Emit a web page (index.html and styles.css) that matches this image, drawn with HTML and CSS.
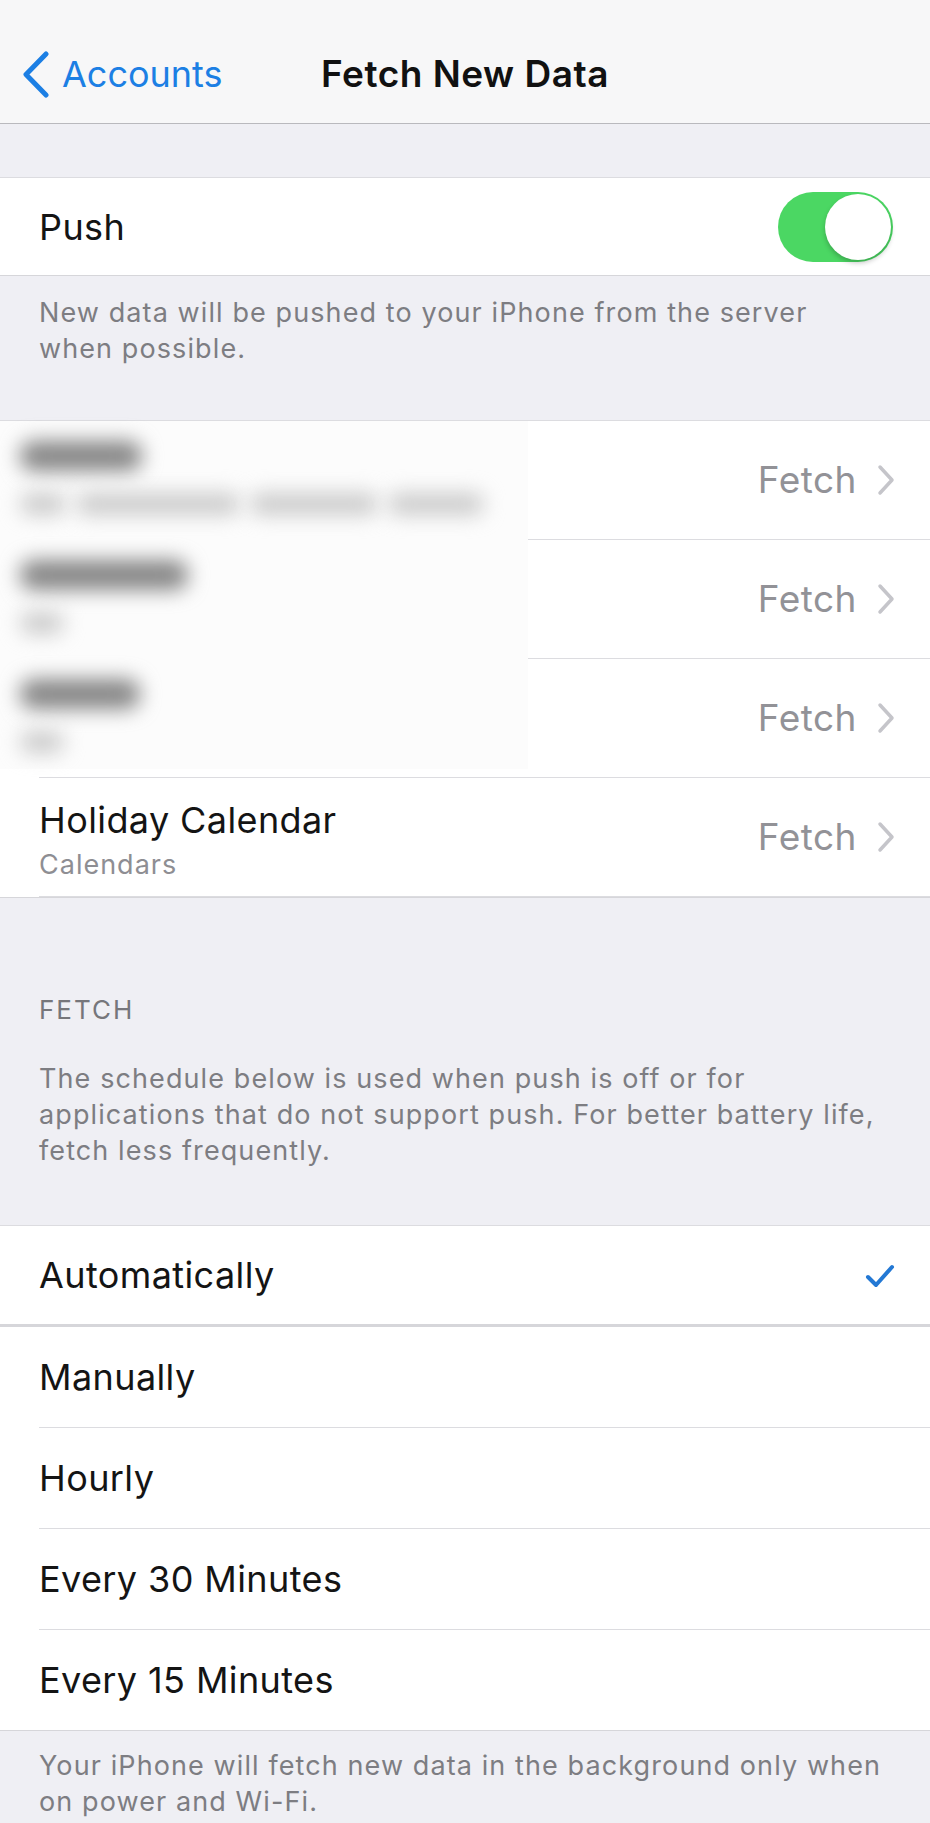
FILE: index.html
```html
<!DOCTYPE html>
<html lang="en">
<head>
    <meta charset="UTF-8">
    <meta name="viewport" content="width=device-width, initial-scale=1.0">
    <title>Fetch New Data</title>
    <link rel="stylesheet" href="styles.css">
</head>
<body>
    <!-- Navigation bar -->
    <div class="navbar">
        <div class="back">
            <svg class="back-chevron" width="28" height="47" viewBox="0 0 28 47">
                <path d="M24 3 L4 23.5 L24 44" />
            </svg>
            <span>Accounts</span>
        </div>
        <div class="title">Fetch New Data</div>
    </div>

    <!-- Push switch -->
    <div class="group group-first">
        <div class="cell">
            <div class="cell-content cell-push">
                <span class="label">Push</span>
                <span class="switch on"></span>
            </div>
        </div>
    </div>
    <p class="note note-push">New data will be pushed to your iPhone from the server<br>when possible.</p>

    <!-- Accounts (first three are redacted) -->
    <div class="group group-accounts">
        <div class="cell">
            <div class="cell-content cell-account">
                <span class="label"></span>
                <span class="value">Fetch <svg class="chevron" width="18" height="32" viewBox="0 0 18 32"><path d="M3 3 L15 16 L3 29" /></svg></span>
            </div>
        </div>
        <div class="cell">
            <div class="cell-content cell-account">
                <span class="label"></span>
                <span class="value">Fetch <svg class="chevron" width="18" height="32" viewBox="0 0 18 32"><path d="M3 3 L15 16 L3 29" /></svg></span>
            </div>
        </div>
        <div class="cell">
            <div class="cell-content cell-account">
                <span class="label"></span>
                <span class="value">Fetch <svg class="chevron" width="18" height="32" viewBox="0 0 18 32"><path d="M3 3 L15 16 L3 29" /></svg></span>
            </div>
        </div>
        <div class="cell">
            <div class="cell-content cell-account">
                <div class="account">
                    <div class="label">Holiday Calendar</div>
                    <div class="sublabel">Calendars</div>
                </div>
                <span class="value">Fetch <svg class="chevron" width="18" height="32" viewBox="0 0 18 32"><path d="M3 3 L15 16 L3 29" /></svg></span>
            </div>
        </div>

        <!-- blurred patch over the private account names -->
        <div class="redact">
            <div class="redact-row">
                <div class="blob blob-title blob-w1"></div>
                <div class="blob-line">
                    <div class="blob blob-sub blob-s1"></div>
                    <div class="blob blob-sub blob-s2"></div>
                    <div class="blob blob-sub blob-s3"></div>
                    <div class="blob blob-sub blob-s4"></div>
                </div>
            </div>
            <div class="redact-row">
                <div class="blob blob-title blob-w2"></div>
                <div class="blob-line">
                    <div class="blob blob-sub blob-s5"></div>
                </div>
            </div>
            <div class="redact-row">
                <div class="blob blob-title blob-w3"></div>
                <div class="blob-line">
                    <div class="blob blob-sub blob-s5"></div>
                </div>
            </div>
        </div>
    </div>

    <!-- Fetch schedule -->
    <div class="section-header">FETCH</div>
    <p class="note note-fetch">The schedule below is used when push is off or for<br>applications that do not support push. For better battery life,<br>fetch less frequently.</p>

    <div class="group group-schedule">
        <div class="cell selected">
            <div class="cell-content">
                <span class="label">Automatically</span>
                <svg class="check" width="30" height="25" viewBox="0 0 30 25">
                    <path d="M3 14 L11 22 L27 4" />
                </svg>
            </div>
        </div>
        <div class="cell">
            <div class="cell-content"><span class="label">Manually</span></div>
        </div>
        <div class="cell">
            <div class="cell-content"><span class="label">Hourly</span></div>
        </div>
        <div class="cell">
            <div class="cell-content"><span class="label">Every 30 Minutes</span></div>
        </div>
        <div class="cell">
            <div class="cell-content"><span class="label">Every 15 Minutes</span></div>
        </div>
    </div>
    <p class="note note-bottom">Your iPhone will fetch new data in the background only when<br>on power and Wi-Fi.</p>
</body>
</html>
```

FILE: styles.css
```css
/* Page base, iOS grouped settings look */
body {
    margin: 0;
    background-color: #efeff4;
    font-family: Inter, "Noto Sans", sans-serif;
    color: #141414;
}

/* Navigation bar */
.navbar {
    display: grid;
    grid-template-columns: 1fr auto 1fr;
    align-items: center;
    height: 124px;
    box-sizing: border-box;
    padding: 52px 0 27px;
    background-color: #f7f7f8;
    border-bottom: 1px solid #b9b9bd;
}
.back {
    display: flex;
    align-items: center;
    gap: 12px;
    padding-left: 22px;
    color: #1c7fe4;
    font-size: 36px;
    line-height: 44px;
}
.back-chevron {
    margin: -2px 0;
}
.back-chevron path {
    fill: none;
    stroke: #1c7fe4;
    stroke-width: 5;
    stroke-linecap: round;
    stroke-linejoin: round;
}
.title {
    font-size: 37px;
    font-weight: 600;
    letter-spacing: 0.5px;
    line-height: 44px;
    color: #111;
}

/* Grouped table sections */
.group {
    position: relative;
    background-color: #fff;
    border-top: 1px solid #dcdce0;
    border-bottom: 1px solid #d6d6da;
}
.group-first {
    margin-top: 53px;
}
.cell {
    padding-left: 39px;
}
.cell-content {
    display: flex;
    align-items: center;
    justify-content: space-between;
    height: 100px;
    padding-right: 35px;
    border-bottom: 1px solid #dcdce0;
}
.cell:last-child .cell-content {
    border-bottom: none;
}
.cell-push {
    height: 97px;
    padding-right: 37px;
}
.cell-account {
    height: 118px;
}
.cell:last-child .cell-account {
    height: 120px;
}
.account {
    margin-top: 6px;
}
.label {
    font-size: 36px;
    letter-spacing: 0.4px;
    line-height: 44px;
}
.sublabel {
    margin-top: 6px;
    font-size: 27px;
    letter-spacing: 1px;
    line-height: 34px;
    color: #8e8e93;
}
.value {
    display: flex;
    align-items: center;
    gap: 20px;
    font-size: 37px;
    letter-spacing: 0.5px;
    line-height: 44px;
    color: #929297;
}
.chevron path {
    fill: none;
    stroke: #c5c5ca;
    stroke-width: 3.5;
    stroke-linecap: round;
    stroke-linejoin: round;
}

/* Toggle switch */
.switch {
    position: relative;
    width: 115px;
    height: 70px;
    border-radius: 35px;
    background-color: #4bd763;
}
.switch::after {
    content: '';
    position: absolute;
    top: 2px;
    right: 2px;
    width: 66px;
    height: 66px;
    border-radius: 50%;
    background-color: #fff;
    box-shadow: 0 3px 5px rgba(0,0,0,0.22);
}

/* Footer notes and headers */
.note {
    margin: 0;
    padding: 19px 39px 53px;
    font-size: 27px;
    letter-spacing: 1.1px;
    line-height: 36px;
    color: #7d7d82;
}
.note-fetch {
    padding: 33px 39px 56px;
}
.note-bottom {
    padding: 17px 39px 0;
}
.section-header {
    padding: 94px 39px 0;
    font-size: 26px;
    letter-spacing: 2px;
    line-height: 36px;
    color: #76767b;
}

/* Selected row: full width, thicker separator */
.cell.selected {
    padding-left: 0;
}
.cell.selected .cell-content {
    height: 98px;
    padding-left: 39px;
    border-bottom: 3px solid #d6d6da;
}
.check path {
    fill: none;
    stroke: #2378d4;
    stroke-width: 4;
    stroke-linecap: round;
    stroke-linejoin: round;
}

/* Redaction patch over private account names */
.redact {
    position: absolute;
    top: 0;
    left: 0;
    width: 528px;
    height: 348px;
    background-color: #fcfcfc;
}
.redact-row {
    height: 119px;
    padding: 20px 0 0 20px;
    box-sizing: border-box;
}
.blob {
    border-radius: 14px;
    filter: blur(10px);
}
.blob-title {
    height: 30px;
    background-color: #858585;
}
.blob-sub {
    height: 22px;
    background-color: #cbcbcb;
}
.blob-line {
    display: flex;
    gap: 10px;
    margin-top: 22px;
}
.blob-w1 { width: 122px; }
.blob-w2 { width: 168px; }
.blob-w3 { width: 120px; }
.blob-s1 { width: 46px; }
.blob-s2 { width: 164px; }
.blob-s3 { width: 128px; }
.blob-s4 { width: 96px; }
.blob-s5 { width: 44px; }
```
